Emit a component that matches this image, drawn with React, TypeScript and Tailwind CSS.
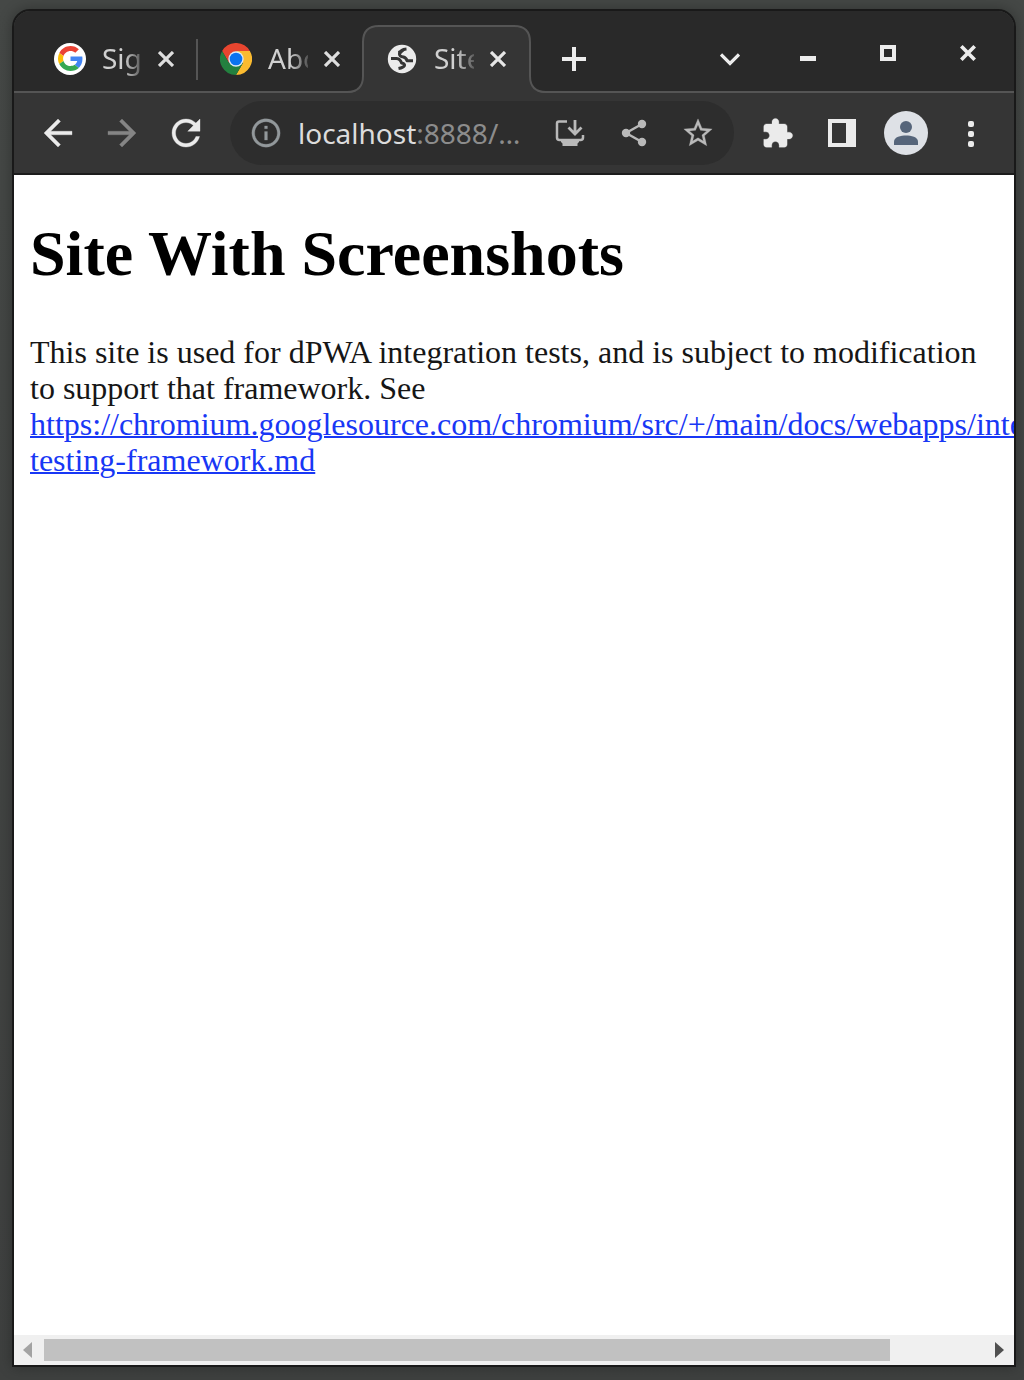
import React from 'react';

type IconProps = { d: string; size: number; className?: string };

function Glyph({ d, size, className = '' }: IconProps) {
  return (
    <svg
      width={size}
      height={size}
      viewBox="0 0 24 24"
      fill="currentColor"
      stroke="currentColor"
      strokeWidth="0.2"
      className={`shrink-0 ${className}`}
    >
      <path d={d} />
    </svg>
  );
}

const paths = {
  back: 'M20 11H7.83l5.59-5.59L12 4l-8 8 8 8 1.41-1.41L7.83 13H20v-2z',
  forward: 'M12 4l-1.41 1.41L16.17 11H4v2h12.17l-5.58 5.59L12 20l8-8z',
  reload:
    'M17.65 6.35C16.2 4.9 14.21 4 12 4c-4.42 0-7.99 3.58-7.99 8s3.57 8 7.99 8c3.73 0 6.84-2.55 7.73-6h-2.08c-.82 2.33-3.04 4-5.65 4-3.31 0-6-2.69-6-6s2.69-6 6-6c1.66 0 3.14.69 4.22 1.78L13 11h7V4l-2.35 2.35z',
  info: 'M11 7h2v2h-2zm0 4h2v6h-2zm1-9C6.48 2 2 6.48 2 12s4.48 10 10 10 10-4.48 10-10S17.52 2 12 2zm0 18c-4.41 0-8-3.59-8-8s3.59-8 8-8 8 3.59 8 8-3.59 8-8 8z',
  star: 'M22 9.24l-7.19-.62L12 2 9.19 8.63 2 9.24l5.46 4.73L5.82 21 12 17.27 18.18 21l-1.63-7.03L22 9.24zM12 15.4l-3.76 2.27 1-4.28-3.32-2.88 4.38-.38L12 6.1l1.71 4.04 4.38.38-3.32 2.88 1 4.28L12 15.4z',
  puzzle:
    'M20.5 11H19V7c0-1.1-.9-2-2-2h-4V3.5C13 2.12 11.88 1 10.5 1S8 2.12 8 3.5V5H4c-1.1 0-1.99.9-1.99 2v3.8H3.5c1.49 0 2.7 1.21 2.7 2.7s-1.21 2.7-2.7 2.7H2V20c0 1.1.9 2 2 2h3.8v-1.5c0-1.49 1.21-2.7 2.7-2.7 1.49 0 2.7 1.21 2.7 2.7V22H17c1.1 0 2-.9 2-2v-4h1.5c1.38 0 2.5-1.12 2.5-2.5S21.88 11 20.5 11z',
};

function GoogleIcon() {
  return (
    <span className="flex size-8 shrink-0 items-center justify-center rounded-full bg-white">
      <svg width="25" height="25" viewBox="0 0 48 48">
        <path fill="#EA4335" d="M24 9.5c3.54 0 6.71 1.22 9.21 3.6l6.85-6.85C35.9 2.38 30.47 0 24 0 14.62 0 6.51 5.38 2.56 13.22l7.98 6.19C12.43 13.72 17.74 9.5 24 9.5z" />
        <path fill="#4285F4" d="M46.98 24.55c0-1.57-.15-3.09-.38-4.55H24v9.02h12.94c-.58 2.96-2.26 5.48-4.78 7.18l7.73 6c4.51-4.18 7.09-10.36 7.09-17.65z" />
        <path fill="#FBBC05" d="M10.53 28.59c-.48-1.45-.76-2.99-.76-4.59s.27-3.14.76-4.59l-7.98-6.19C.92 16.46 0 20.12 0 24c0 3.88.92 7.54 2.56 10.78l7.97-6.19z" />
        <path fill="#34A853" d="M24 48c6.48 0 11.93-2.13 15.89-5.81l-7.73-6c-2.15 1.45-4.92 2.3-8.16 2.3-6.26 0-11.57-4.22-13.47-9.91l-7.98 6.19C6.51 42.62 14.62 48 24 48z" />
      </svg>
    </span>
  );
}

function ChromeIcon() {
  return (
    <svg width="32" height="32" viewBox="0 0 48 48" className="shrink-0">
      <path fill="#E8452F" d="M24 12h20.8A24 24 0 0 0 3.2 12l10.4 18L24 24z" />
      <path fill="#FBBB30" d="M34.4 30L24 48a24 24 0 0 0 20.8-36H24z" />
      <path fill="#23803F" d="M13.6 30L3.2 12A24 24 0 0 0 24 48l10.4-18L24 24z" />
      <circle cx="24" cy="24" r="11.5" fill="#dfe9f5" />
      <circle cx="24" cy="24" r="9.5" fill="#0B73F0" />
    </svg>
  );
}

function GlobeIcon() {
  return (
    <svg width="32" height="32" viewBox="0 0 32 32" className="shrink-0">
      <circle cx="16" cy="16" r="14.2" fill="#ebebeb" />
      <g fill="none" stroke="#353535" strokeWidth="3" strokeLinejoin="round">
        <path d="M20.5 6Q14.5 6.5 13.500 10.500Q13 13.500 17.500 14Q20.500 15 21 17.800H27" />
        <path d="M5 15.500H10.500Q14.500 16 15.500 20Q19 20.500 18.500 22.500Q17.500 24.500 12.500 25.500" />
      </g>
      <path d="M12 8Q16.500 6 20 6.500L16 10L13 13.500Z" fill="#353535" />
    </svg>
  );
}

function CloseIcon({ className = '' }: { className?: string }) {
  return (
    <svg width="16" height="16" viewBox="0 0 16 16" className={`shrink-0 ${className}`}>
      <path d="M1 1l14 14M15 1L1 15" stroke="currentColor" strokeWidth="3.2" />
    </svg>
  );
}

function TabTitle({ children }: { children: string }) {
  return (
    <span className="mb-[2px] ml-4 w-10 overflow-hidden whitespace-nowrap text-[28px] leading-9 text-[#d0d0d0] [mask-image:linear-gradient(to_right,black_55%,rgba(0,0,0,0.25)_100%)]">
      {children}
    </span>
  );
}

function Tab({ icon, title, separator }: { icon: React.ReactNode; title: string; separator?: boolean }) {
  return (
    <div className="relative flex h-full w-[166px] shrink-0 items-center pt-[15px] pl-[22px]">
      {icon}
      <TabTitle>{title}</TabTitle>
      <CloseIcon className="ml-4 text-[#dedede]" />
      {separator && <span className="absolute top-[28px] right-0 h-[41px] w-[2px] bg-[#555]" />}
    </div>
  );
}

function ActiveTab() {
  return (
    <div className="relative flex h-full w-[166px] shrink-0 items-center pt-[15px] pl-[22px]">
      <svg width="200" height="70" viewBox="0 0 200 70" className="absolute -bottom-[4px] -left-[17px]">
        <path d="M0 68Q16 68 16 52V17Q16 2 32 2H167Q183 2 183 17V52Q183 68 199 68V70H0z" fill="#353535" />
        <path
          d="M0 67Q16 67 16 51V17Q16 1 32 1H167Q183 1 183 17V51Q183 67 199 67"
          fill="none"
          stroke="#555"
          strokeWidth="2"
        />
      </svg>
      <div className="relative flex items-center">
        <GlobeIcon />
        <TabTitle>Site With</TabTitle>
        <CloseIcon className="ml-4 text-[#e6e6e6]" />
      </div>
    </div>
  );
}

function TabStrip() {
  return (
    <div className="flex h-[82px] shrink-0 border-b-2 border-[#555] bg-[#292929] pl-[18px] text-[#ececec]">
      <Tab icon={<GoogleIcon />} title="Sign in" separator />
      <Tab icon={<ChromeIcon />} title="About" />
      <ActiveTab />
      <svg width="24" height="24" viewBox="0 0 24 24" className="mt-[36px] ml-[32px] shrink-0">
        <path d="M12 0v24M0 12h24" stroke="currentColor" strokeWidth="4" />
      </svg>
      <svg width="20" height="13" viewBox="0 0 20 13" className="mt-[42px] ml-auto shrink-0">
        <path d="M1 1.500l9 9 9-9" fill="none" stroke="currentColor" strokeWidth="3.2" />
      </svg>
      <span className="mt-[45px] ml-[60px] h-[5px] w-4 shrink-0 bg-[#ececec]" />
      <span className="mt-[34px] ml-16 size-4 shrink-0 border-4 border-[#ececec]" />
      <svg width="16" height="16" viewBox="0 0 16 16" className="mt-[34px] mr-[38px] ml-16 shrink-0">
        <path d="M1.300 1.300l13.400 13.400M14.700 1.300L1.300 14.700" stroke="currentColor" strokeWidth="3.700" />
      </svg>
    </div>
  );
}

function Omnibox() {
  return (
    <div className="ml-[23px] flex h-16 w-[504px] shrink-0 items-center rounded-full bg-[#2d2d2d] pl-[19px] text-[#b9b9b9]">
      <Glyph d={paths.info} size={34} className="text-[#92989b]" />
      <div className="ml-[15px] w-[240px] whitespace-nowrap text-[28px] leading-9 text-[#8c8c8c]">
        <span className="text-[#dcdcdc]">localhost</span>:8888/…
      </div>
      <svg width="30" height="28" viewBox="0 0 30 28" className="ml-[17px] shrink-0">
        <path d="M12 2.500H4Q2 2.500 2 4.500V18.500Q2 21 4.500 21H25.500Q28 21 28 18.500V16" fill="none" stroke="currentColor" strokeWidth="2.500" />
        <path d="M6 21h18v2l-1.500 1.500V27h-15v-2.500L6 23z" fill="currentColor" />
        <path d="M20 1v13M13.500 8.500L20 15l6.500-6.500" fill="none" stroke="currentColor" strokeWidth="2.800" />
      </svg>
      <svg width="26" height="28" viewBox="0 0 26 28" className="ml-[36px] shrink-0">
        <path d="M21 5L5 14l16 9" fill="none" stroke="currentColor" strokeWidth="2.400" />
        <circle cx="21" cy="5" r="4.200" fill="currentColor" />
        <circle cx="5" cy="14" r="4.200" fill="currentColor" />
        <circle cx="21" cy="23" r="4.200" fill="currentColor" />
      </svg>
      <Glyph d={paths.star} size={34} className="ml-[34px]" />
    </div>
  );
}

function Toolbar() {
  return (
    <div className="flex h-[82px] shrink-0 items-center border-b-2 border-[#1c1c1c] bg-[#353535] pl-[23px] text-[#ebebeb]">
      <Glyph d={paths.back} size={42} />
      <Glyph d={paths.forward} size={42} className="ml-[22px] text-[#858585]" />
      <Glyph d={paths.reload} size={42} className="ml-[22px]" />
      <Omnibox />
      <Glyph d={paths.puzzle} size={33} className="ml-[27px]" />
      <svg width="28" height="28" viewBox="0 0 28 28" className="ml-[34px] shrink-0">
        <path fillRule="evenodd" d="M0 0h28v28H0zM4 4v20h14V4z" fill="currentColor" />
      </svg>
      <span className="ml-[28px] flex size-11 shrink-0 items-center justify-center rounded-full bg-[#dee1e6]">
        <svg width="24" height="24" viewBox="0 0 24 24" fill="#56657a">
          <circle cx="12" cy="6" r="6" />
          <path d="M0 24v-3.500C0 16 7 14.500 12 14.500S24 16 24 20.500V24z" />
        </svg>
      </span>
      <span className="mt-[2px] ml-[40px] flex flex-col gap-1">
        <span className="size-[6px] rounded-[2px] bg-[#ebebeb]" />
        <span className="size-[6px] rounded-[2px] bg-[#ebebeb]" />
        <span className="size-[6px] rounded-[2px] bg-[#ebebeb]" />
      </span>
    </div>
  );
}

function Page() {
  return (
    <main className="min-h-0 flex-1 overflow-hidden bg-white pl-4 font-['Liberation_Serif',serif] text-[#161616]">
      <h1 className="mt-[43px] text-[64px] leading-[72px] font-bold whitespace-nowrap text-black">
        Site With Screenshots
      </h1>
      <p className="mt-[44px] text-[32px] leading-9 whitespace-nowrap">
        This site is used for dPWA integration tests, and is subject to modification
        <br />
        to support that framework. See
        <br />
        <a href="#" className="text-[#1837f5] underline decoration-2">
          https://chromium.googlesource.com/chromium/src/+/main/docs/webapps/integration-
          <br />
          testing-framework.md
        </a>
      </p>
    </main>
  );
}

function Scrollbar() {
  return (
    <div className="flex h-[30px] shrink-0 items-center bg-[#f0f0f0] pl-[9px]">
      <svg width="9" height="16" viewBox="0 0 9 16" className="shrink-0">
        <path d="M9 0v16L0 8z" fill="#a3a3a3" />
      </svg>
      <div className="ml-3 h-[22px] w-[846px] shrink-0 bg-[#c1c1c1]" />
      <svg width="9" height="16" viewBox="0 0 9 16" className="ml-[105px] shrink-0">
        <path d="M0 0v16l9-8z" fill="#505050" />
      </svg>
    </div>
  );
}

export default function App() {
  return (
    <div className="h-[1380px] w-[1024px] overflow-hidden bg-[linear-gradient(to_bottom,#454846,#3e403f)] pt-[9px] pl-[12px] font-['Noto_Sans',sans-serif]">
      <div className="flex h-[1358px] w-[1004px] flex-col overflow-hidden rounded-t-[18px] border-2 border-[#191919] shadow-[0_0_14px_rgba(0,0,0,0.3)]">
        <TabStrip />
        <Toolbar />
        <Page />
        <Scrollbar />
      </div>
    </div>
  );
}
